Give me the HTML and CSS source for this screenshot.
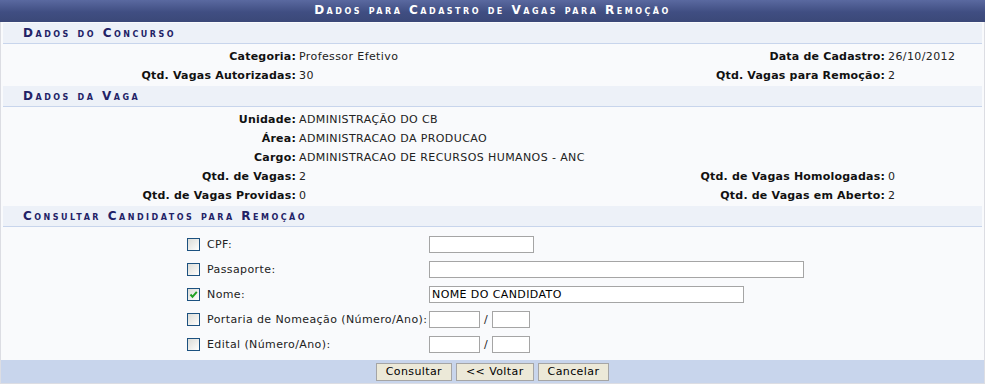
FILE: index.html
```html
<!DOCTYPE html>
<html lang="pt-BR">
<head>
    <meta charset="UTF-8">
    <title>Dados para Cadastro de Vagas para Remoção</title>
    <link rel="stylesheet" href="styles.css">
</head>
<body>
    <div class="formulario">
        <div class="caption">Dados para Cadastro de Vagas para Remoção</div>
        <div class="corpo">
            <div class="subtitulo">Dados do Concurso</div>
            <div class="dados">
                <div class="rotulo">Categoria:</div>
                <div class="valor">Professor Efetivo</div>
                <div class="rotulo">Data de Cadastro:</div>
                <div class="valor">26/10/2012</div>

                <div class="rotulo">Qtd. Vagas Autorizadas:</div>
                <div class="valor">30</div>
                <div class="rotulo">Qtd. Vagas para Remoção:</div>
                <div class="valor">2</div>
            </div>

            <div class="subtitulo">Dados da Vaga</div>
            <div class="dados">
                <div class="rotulo">Unidade:</div>
                <div class="valor largo">ADMINISTRAÇÃO DO CB</div>

                <div class="rotulo">Área:</div>
                <div class="valor largo">ADMINISTRACAO DA PRODUCAO</div>

                <div class="rotulo">Cargo:</div>
                <div class="valor largo">ADMINISTRACAO DE RECURSOS HUMANOS - ANC</div>

                <div class="rotulo">Qtd. de Vagas:</div>
                <div class="valor">2</div>
                <div class="rotulo">Qtd. de Vagas Homologadas:</div>
                <div class="valor">0</div>

                <div class="rotulo">Qtd. de Vagas Providas:</div>
                <div class="valor">0</div>
                <div class="rotulo">Qtd. de Vagas em Aberto:</div>
                <div class="valor">2</div>
            </div>

            <div class="subtitulo">Consultar Candidatos para Remoção</div>
            <div class="filtros">
                <span class="chk"></span>
                <label>CPF:</label>
                <div class="campo"><input type="text" class="cpf"></div>

                <span class="chk"></span>
                <label>Passaporte:</label>
                <div class="campo"><input type="text" class="passaporte"></div>

                <span class="chk marcado">
                    <svg width="11" height="11" viewBox="0 0 11 11"><path d="M2.5 5.5 L4.5 7.8 L8.8 2.8" fill="none" stroke="#21a121" stroke-width="2"/></svg>
                </span>
                <label>Nome:</label>
                <div class="campo"><input type="text" class="nome" value="NOME DO CANDIDATO"></div>

                <span class="chk"></span>
                <label>Portaria de Nomeação (Número/Ano):</label>
                <div class="campo"><input type="text" class="numero"> / <input type="text" class="ano"></div>

                <span class="chk"></span>
                <label>Edital (Número/Ano):</label>
                <div class="campo"><input type="text" class="numero"> / <input type="text" class="ano"></div>
            </div>
        </div>
        <div class="rodape">
            <button>Consultar</button>
            <button>&lt;&lt; Voltar</button>
            <button>Cancelar</button>
        </div>
    </div>
</body>
</html>
```

FILE: styles.css
```css
body {
    margin: 0;
    background: #fff;
    font-family: "DejaVu Sans", Verdana, sans-serif;
    font-size: 11px;
    letter-spacing: 0.4px;
    color: #222;
}

.formulario {
    width: 985px;
}

.caption {
    height: 22px;
    line-height: 21px;
    background: linear-gradient(#5a69a0, #404e82 55%, #3b4878);
    color: #fff;
    text-align: center;
    font-weight: bold;
    font-variant: small-caps;
    letter-spacing: 2.5px;
    font-size: 12px;
}

.corpo {
    background: #f9fafc;
    border-left: 1px solid #dcdde3;
    border-right: 1px solid #dcdde3;
    padding-top: 1px;
}

.subtitulo {
    margin: 0 2px;
    height: 20px;
    line-height: 21px;
    padding-left: 20px;
    background: #edf1f8;
    border-bottom: 1px solid #c8d5ec;
    color: #222266;
    font-weight: bold;
    font-variant: small-caps;
    letter-spacing: 2.5px;
    font-size: 12px;
}

.dados {
    display: grid;
    grid-template-columns: 295px 297px 286px 1fr;
    column-gap: 3px;
    padding: 3px 0 1px;
}

.rotulo,
.valor {
    height: 19px;
    line-height: 19px;
    white-space: nowrap;
}

.rotulo {
    text-align: right;
    font-weight: bold;
    letter-spacing: 0.2px;
    color: #111;
}

.valor.largo {
    grid-column: 2 / 5;
}

.filtros {
    display: grid;
    grid-template-columns: 13px 222px 1fr;
    column-gap: 7px;
    grid-auto-rows: 25px;
    align-items: center;
    padding: 5px 0 3px 186px;
}

.filtros .campo {
    margin-left: -7px;
}

.chk {
    width: 11px;
    height: 11px;
    border: 1px solid #1c5180;
    background: linear-gradient(135deg, #dcdcd7, #f4f4f2 70%, #fff);
    display: flex;
    align-items: center;
    justify-content: center;
}

input[type="text"] {
    box-sizing: border-box;
    height: 17px;
    border: 1px solid #a5a5a5;
    background: #fff;
    padding: 0 2px;
    margin: 0;
    font-family: "DejaVu Sans", Verdana, sans-serif;
    font-size: 11px;
    letter-spacing: 0.4px;
    color: #000;
    vertical-align: middle;
}

.cpf { width: 105px; }
.passaporte { width: 375px; }
.nome { width: 315px; }
.numero { width: 51px; }
.ano { width: 38px; }

.rodape {
    background: #c8d5ec;
    border: 1px solid #dcdde3;
    border-top: 0;
    height: 23px;
    display: flex;
    justify-content: center;
    align-items: center;
    gap: 4px;
}

.rodape button {
    height: 18px;
    padding: 0 9px;
    background: #ece9d8;
    border: 1px solid #a5a5a5;
    font-family: "DejaVu Sans", Verdana, sans-serif;
    font-size: 11px;
    letter-spacing: 0.4px;
    color: #000;
}
```
